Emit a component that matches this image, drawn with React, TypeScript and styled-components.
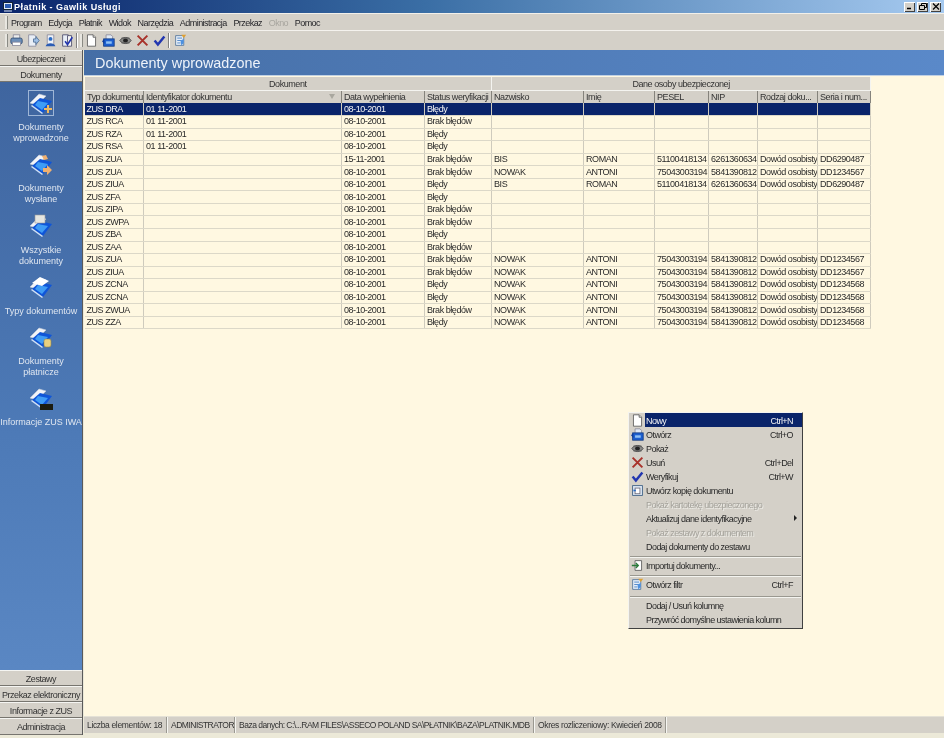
import styled, { createGlobalStyle } from "styled-components";
import type { ReactNode } from "react";

const GlobalStyle = createGlobalStyle`
  html, body {
    margin: 0;
    padding: 0;
    background: #ece9d8;
  }
  body {
    font-family: "Liberation Sans", Arial, sans-serif;
    font-size: 9px;
    letter-spacing: -0.45px;
    color: #1c1c1c;
  }
`;

const Window = styled.div`
  width: 944px;
  height: 738px;
  position: relative;
  overflow: hidden;
  display: flex;
  flex-direction: column;
  background: #ece9d8;
  filter: blur(0.3px);
`;

const TitleBar = styled.div`
  height: 13px;
  flex: none;
  display: flex;
  align-items: center;
  background: linear-gradient(90deg, #0a246a 0%, #3a6ea5 45%, #a6caf0 100%);
  color: #fff;
  font-weight: 700;
  font-size: 9px;
  letter-spacing: 0.45px;
  padding: 0 3px 0 3px;
  gap: 1px;
`;

const TitleText = styled.span`
  flex: 1;
`;

const WinButtons = styled.div`
  display: flex;
  gap: 2px;
`;

const WinButton = styled.div`
  width: 11px;
  height: 10px;
  background: #d4d0c8;
  box-shadow: inset 1px 1px 0 #fff, inset -1px -1px 0 #404040;
  color: #000;
  display: flex;
  align-items: center;
  justify-content: center;
`;

const MenuBar = styled.div`
  height: 16px;
  flex: none;
  display: flex;
  align-items: center;
  background: #d4d0c8;
  border-top: 1px solid #f2f0ea;
  padding-left: 5px;
  border-bottom: 1px solid #f4f2ee;
`;

const Grip = styled.div`
  width: 2px;
  height: 13px;
  flex: none;
  background: #e8e6e0;
  border-right: 1px solid #8a8a84;
`;

const MenuItems = styled.div`
  display: flex;
  gap: 6.7px;
  margin-left: 3px;
  letter-spacing: -0.55px;
`;

const MenuItem = styled.span<{ $off?: boolean }>`
  color: ${(p) => (p.$off ? "#a8a69f" : "#26262a")};
  padding-top: 1px;
`;

const ToolBar = styled.div`
  height: 18px;
  flex: none;
  display: flex;
  align-items: center;
  background: #d4d0c8;
  padding: 0 0 1px 5px;
  box-sizing: content-box;
  margin-bottom: -1px;
  border-bottom: 1px solid #8f8d86;
`;

const ToolGroup = styled.div`
  display: flex;
  align-items: center;
  gap: 4px;
  margin-left: 2px;
  svg {
    width: 13px;
    height: 13px;
  }
`;

const ToolDivider = styled.div`
  width: 1px;
  height: 15px;
  background: #808080;
  border-right: 1px solid #fff;
  margin: 0 2px;
`;

const Body = styled.div`
  flex: 1;
  display: flex;
  min-height: 0;
  margin-bottom: 3px;
`;

const Side = styled.div`
  width: 82px;
  flex: none;
  display: flex;
  flex-direction: column;
  background: #d4d0c8;
  border-right: 1px solid #5a5a5a;
`;

const SideTab = styled.div<{ $h?: number }>`
  height: ${(p) => p.$h ?? 16}px;
  flex: none;
  box-sizing: border-box;
  display: flex;
  align-items: center;
  justify-content: center;
  padding-top: 1px;
  background: #d4d0c8;
  border-top: 1px solid #f5f5f2;
  border-bottom: 1px solid #77756f;
  color: #333;
  white-space: nowrap;
`;

const SideList = styled.div`
  flex: 1;
  display: flex;
  flex-direction: column;
  align-items: center;
  padding-top: 9px;
  background: linear-gradient(180deg, #3f659f 0%, #4d7ab7 60%, #5a87c3 100%);
`;

const SideItem = styled.div`
  width: 100%;
  flex: none;
  padding-bottom: 8.3px;
  display: flex;
  flex-direction: column;
  align-items: center;
  color: #dfe6f0;
  font-size: 9px;
  letter-spacing: 0;
  line-height: 11px;
  text-align: center;
  white-space: nowrap;
`;

const SideIconBox = styled.div<{ $active?: boolean }>`
  width: 24px;
  height: 24px;
  margin-bottom: 7px;
  display: flex;
  align-items: center;
  justify-content: center;
  outline: ${(p) => (p.$active ? "1px solid #9fb6d6" : "none")};
`;

const Main = styled.div`
  flex: 1;
  display: flex;
  flex-direction: column;
  min-width: 0;
  padding-left: 1px;
  background: #ece9d8;
`;

const Heading = styled.div`
  height: 25px;
  flex: none;
  display: flex;
  align-items: center;
  padding-left: 11px;
  color: #eef3fa;
  font-size: 14.4px;
  letter-spacing: 0;
  background: linear-gradient(90deg, #456ea6 0%, #5a89c9 100%);
  border-bottom: 1px solid #c0d0e4;
`;

const Content = styled.div`
  flex: 1;
  min-height: 0;
  padding-top: 1px;
  background: #fff8e1;
`;

const Table = styled.table`
  border-collapse: collapse;
  table-layout: fixed;
  width: 786px;
  font-size: 9px;
`;

const GroupCell = styled.th`
  height: 13px;
  padding: 0;
  font-weight: 400;
  text-align: center;
  color: #333;
  background: #d4d0c8;
  border-right: 1px solid #f4f4f0;
  border-bottom: 1px solid #f4f4f0;
`;

const HeadCell = styled.th`
  height: 12px;
  padding: 0 0 0 2px;
  font-weight: 400;
  text-align: left;
  color: #333;
  white-space: nowrap;
  overflow: hidden;
  position: relative;
  background: #d4d0c8;
  border-left: 1px solid #f4f4f0;
  border-right: 1px solid #85837c;
`;

const SortMark = styled.span`
  position: absolute;
  right: 6px;
  top: 3px;
  width: 0;
  height: 0;
  border-left: 3px solid transparent;
  border-right: 3px solid transparent;
  border-top: 5px solid #a9a79f;
`;

const Row = styled.tr<{ $on?: boolean }>`
  height: 12.55px;
  background: ${(p) => (p.$on ? "#0a246a" : "#fff8e1")};
  color: ${(p) => (p.$on ? "#f4f4f4" : "#2a2a2a")};
`;

const Cell = styled.td`
  padding: 0 0 0 2px;
  white-space: nowrap;
  overflow: hidden;
  line-height: 11px;
  border-right: 1px solid #cfcbbd;
  border-bottom: 1px solid #dcd8c8;
`;

const StatusBar = styled.div`
  height: 17px;
  flex: none;
  display: flex;
  margin-bottom: 2px;
  background: #d4d0c8;
  border-top: 1px solid #e4e1d6;
  box-sizing: border-box;
  font-size: 8.5px;
  letter-spacing: -0.35px;
  color: #333;
`;

const StatusCell = styled.div<{ $w: number; $tight?: boolean }>`
  width: ${(p) => p.$w}px;
  flex: none;
  display: flex;
  align-items: center;
  padding-left: 3px;
  box-sizing: border-box;
  white-space: nowrap;
  overflow: hidden;
  letter-spacing: ${(p) => (p.$tight ? "-0.5px" : "inherit")};
  border-right: 1px solid #f6f6f2;
  box-shadow: inset -1px 0 0 #9a9890;
`;

const Menu = styled.div`
  position: absolute;
  left: 628px;
  top: 412px;
  width: 175px;
  height: 217px;
  box-sizing: border-box;
  background: #d4d0c8;
  border: 1px solid;
  border-color: #f4f4f0 #404040 #404040 #f4f4f0;
  padding: 0 0 0 1px;
  display: flex;
  flex-direction: column;
  letter-spacing: -0.55px;
  color: #2a2a2a;
`;

const MenuRow = styled.div<{ $on?: boolean; $off?: boolean }>`
  height: 14px;
  flex: none;
  display: flex;
  align-items: center;
  background: ${(p) => (p.$on ? "linear-gradient(90deg, #d4d0c8 15px, #0a246a 15px)" : "none")};
  color: ${(p) => (p.$on ? "#f4f4f4" : p.$off ? "#a5a39c" : "#2a2a2a")};
  text-shadow: ${(p) => (p.$off ? "1px 1px 0 #ecebe6" : "none")};
`;

const MenuIcon = styled.div`
  width: 15px;
  height: 14px;
  flex: none;
  margin-right: 1px;
  display: flex;
  align-items: center;
  justify-content: center;
  svg {
    width: 13px;
    height: 13px;
  }
`;

const MenuLabel = styled.span`
  flex: 1;
  white-space: nowrap;
  padding-top: 1px;
`;

const MenuKey = styled.span`
  white-space: nowrap;
  text-align: right;
  padding: 1px 9px 0 0;
`;

const MenuSep = styled.div<{ $top?: number }>`
  height: 1px;
  flex: none;
  margin: ${(p) => p.$top ?? 3}px 1px 0 0;
  background: #9a9890;
  border-bottom: 1px solid #f4f4f0;
`;

const Arrow = styled.span`
  width: 0;
  height: 0;
  margin-right: 5px;
  border-top: 3px solid transparent;
  border-bottom: 3px solid transparent;
  border-left: 3px solid #222;
`;

/* icons */
const Ico = ({ children }: { children: ReactNode }) => (
  <svg width="13" height="13" viewBox="0 0 16 16">
    {children}
  </svg>
);

const NewIcon = () => (
  <Ico>
    <path d="M3 1h7l3 3v11H3z" fill="#fff" stroke="#555" />
    <path d="M10 1v3h3" fill="#ddd" stroke="#555" />
  </Ico>
);
const OpenIcon = () => (
  <Ico>
    <path d="M5 1h6l2 2v4H5z" fill="#dfe8f4" stroke="#889" />
    <rect x="2" y="6" width="13" height="9" fill="#1d5fd0" stroke="#123a80" />
    <path d="M5 9h7v3H5z" fill="#8fc0f4" />
    <path d="M0 9l3-3v6z" fill="#0c3a9a" />
  </Ico>
);
const EyeIcon = () => (
  <Ico>
    <path d="M1 8c3-5 11-5 14 0-3 5-11 5-14 0z" fill="#8a8a88" stroke="#444" />
    <ellipse cx="8" cy="8" rx="3" ry="2.4" fill="#222" />
    <path d="M3 5h10M3 11h10" stroke="#555" />
  </Ico>
);
const CrossIcon = () => (
  <Ico>
    <path d="M2 2l12 12M14 2L2 14" stroke="#a8322a" strokeWidth="2.4" />
  </Ico>
);
const CheckIcon = () => (
  <Ico>
    <path d="M2 8l4 5 8-10" fill="none" stroke="#2236b0" strokeWidth="3" />
  </Ico>
);
const CopyIcon = () => (
  <Ico>
    <rect x="2" y="2" width="12" height="12" fill="#dce6f2" stroke="#34587f" />
    <rect x="5" y="5" width="6" height="7" fill="#fff" stroke="#667" />
    <path d="M3 8h3" stroke="#2b6cc4" strokeWidth="2" />
  </Ico>
);
const ImportIcon = () => (
  <Ico>
    <path d="M5 2h8v12H5z" fill="#fff" stroke="#555" />
    <path d="M1 8h7M6 5l3 3-3 3" fill="none" stroke="#2a7a3a" strokeWidth="1.6" />
  </Ico>
);
const FilterIcon = () => (
  <Ico>
    <path d="M2 2h10v12H2z" fill="#e6eef8" stroke="#4c7098" />
    <path d="M4 5h6M4 8h5M4 11h4" stroke="#3a76c0" />
    <path d="M9 1h6l-3 4z" fill="#e0a030" />
    <path d="M8 8l4-2v5l-3 3z" fill="#4c90e0" />
  </Ico>
);
const PrinterIcon = () => (
  <Ico>
    <rect x="4" y="1" width="8" height="5" fill="#eee" stroke="#889" />
    <rect x="1" y="5" width="14" height="7" rx="2" fill="#6d8fb8" stroke="#2f4a70" />
    <rect x="3" y="10" width="10" height="4" fill="#fff" stroke="#889" />
  </Ico>
);
const SendIcon = () => (
  <Ico>
    <path d="M2 1h7l2 2v12H2z" fill="#e8eef6" stroke="#889" />
    <path d="M8 6h3V3l4 5-4 5v-3H8z" fill="#9fc0e6" stroke="#4c6c92" />
  </Ico>
);
const UserIcon = () => (
  <Ico>
    <path d="M4 1h8v13H4z" fill="#eef2f8" stroke="#889" />
    <circle cx="8" cy="6" r="2.4" fill="#2b6cc4" />
    <path d="M2 15c1-5 11-5 12 0z" fill="#2b5cb4" />
  </Ico>
);
const DocCheckIcon = () => (
  <Ico>
    <path d="M2 1h7v14H2z" fill="#e8eef6" stroke="#446" />
    <path d="M8 2h5v13H8z" fill="#f4f4f4" stroke="#446" />
    <path d="M5 9l3 4 6-9" fill="none" stroke="#2236b0" strokeWidth="2" />
  </Ico>
);

const Folder = ({ badge }: { badge?: ReactNode }) => (
  <svg width="24" height="24" viewBox="0 0 24 24">
    <path d="M1 12L10 3l7 2-9 9z" fill="#f2f4f8" stroke="#c6ccd8" strokeWidth="0.6" />
    <path d="M3 14l8-7 12 3-9 12z" fill="#0f55d8" />
    <path d="M9 10l10 2-6 7-7-5z" fill="#3f9cf6" />
    <path d="M3 14l11 8-1 1L2 15z" fill="#cfe0f8" />
    {badge}
  </svg>
);

const docs: [string, ReactNode][] = [
  ["Dokumenty wprowadzone", <path key="a" d="M15 17h3v-3h2v3h3v2h-3v3h-2v-3h-3z" fill="#f0b860" />],
  ["Dokumenty wysłane", <path key="b" d="M14 16h4v-3l5 5-5 5v-3h-4zM13 4l4-1 2 4-4 1z" fill="#f0b070" />],
  ["Wszystkie dokumenty", <rect key="c" x="6" y="1" width="10" height="8" fill="#e6e6e0" stroke="#999" strokeWidth="0.6" />],
  ["Typy dokumentów", <path key="d" d="M3 8l8-6 9 4-7 5z" fill="#fff" />],
  ["Dokumenty płatnicze", <rect key="e" x="15" y="14" width="7" height="8" rx="2" fill="#e8d080" stroke="#a08a40" strokeWidth="0.6" />],
  ["Informacje ZUS IWA", <rect key="f" x="11" y="18" width="13" height="6" fill="#1c1c10" />],
];

const columns = [
  { name: "Typ dokumentu", w: 59 },
  { name: "Identyfikator dokumentu", w: 198, sort: true },
  { name: "Data wypełnienia", w: 83 },
  { name: "Status weryfikacji", w: 67 },
  { name: "Nazwisko", w: 92 },
  { name: "Imię", w: 71 },
  { name: "PESEL", w: 54 },
  { name: "NIP", w: 49 },
  { name: "Rodzaj doku...", w: 60 },
  { name: "Seria i num...", w: 53 },
];

const BIS = ["BIS", "ROMAN", "51100418134", "6261360634", "Dowód osobisty", "DD6290487"];
const NOWAK7 = ["NOWAK", "ANTONI", "75043003194", "5841390812", "Dowód osobisty", "DD1234567"];
const NOWAK8 = ["NOWAK", "ANTONI", "75043003194", "5841390812", "Dowód osobisty", "DD1234568"];
const EMPTY = ["", "", "", "", "", ""];
const OK = "Brak błędów";
const BAD = "Błędy";
const D = "08-10-2001";
const ID = "01 11-2001";

const rows: string[][] = [
  ["ZUS DRA", ID, D, BAD, ...EMPTY],
  ["ZUS RCA", ID, D, OK, ...EMPTY],
  ["ZUS RZA", ID, D, BAD, ...EMPTY],
  ["ZUS RSA", ID, D, BAD, ...EMPTY],
  ["ZUS ZUA", "", "15-11-2001", OK, ...BIS],
  ["ZUS ZUA", "", D, OK, ...NOWAK7],
  ["ZUS ZIUA", "", D, BAD, ...BIS],
  ["ZUS ZFA", "", D, BAD, ...EMPTY],
  ["ZUS ZIPA", "", D, OK, ...EMPTY],
  ["ZUS ZWPA", "", D, OK, ...EMPTY],
  ["ZUS ZBA", "", D, BAD, ...EMPTY],
  ["ZUS ZAA", "", D, OK, ...EMPTY],
  ["ZUS ZUA", "", D, OK, ...NOWAK7],
  ["ZUS ZIUA", "", D, OK, ...NOWAK7],
  ["ZUS ZCNA", "", D, BAD, ...NOWAK8],
  ["ZUS ZCNA", "", D, BAD, ...NOWAK8],
  ["ZUS ZWUA", "", D, OK, ...NOWAK8],
  ["ZUS ZZA", "", D, BAD, ...NOWAK8],
];

const menuItems = ["Program", "Edycja", "Płatnik", "Widok", "Narzędzia", "Administracja", "Przekaz", "Okno", "Pomoc"];

export default function App() {
  return (
    <Window>
      <GlobalStyle />
      <TitleBar>
        <svg width="10" height="10" viewBox="0 0 10 10">
          <rect x="0.5" y="0.5" width="9" height="7" fill="#dfe8f8" stroke="#123" />
          <rect x="2" y="2" width="6" height="4" fill="#2b5cb4" />
          <path d="M1 9h8" stroke="#dfe8f8" />
        </svg>
        <TitleText>Płatnik - Gawlik Usługi</TitleText>
        <WinButtons>
          <WinButton>
            <svg width="8" height="7"><path d="M1 5.5h4" stroke="#000" strokeWidth="1.5" /></svg>
          </WinButton>
          <WinButton>
            <svg width="8" height="7"><path d="M0.5 2.5h5v4h-5zM2.5 2V0.5h5v4H6" fill="none" stroke="#000" /></svg>
          </WinButton>
          <WinButton>
            <svg width="8" height="7"><path d="M1 0.5l6 6M7 0.5l-6 6" stroke="#000" strokeWidth="1.2" /></svg>
          </WinButton>
        </WinButtons>
      </TitleBar>

      <MenuBar>
        <Grip />
        <MenuItems>
          {menuItems.map((m) => (
            <MenuItem key={m} $off={m === "Okno"}>{m}</MenuItem>
          ))}
        </MenuItems>
      </MenuBar>

      <ToolBar>
        <Grip />
        <ToolGroup>
          <PrinterIcon />
          <SendIcon />
          <UserIcon />
          <DocCheckIcon />
        </ToolGroup>
        <ToolDivider />
        <Grip />
        <ToolGroup>
          <NewIcon />
          <OpenIcon />
          <EyeIcon />
          <CrossIcon />
          <CheckIcon />
        </ToolGroup>
        <ToolDivider />
        <ToolGroup>
          <FilterIcon />
        </ToolGroup>
      </ToolBar>

      <Body>
        <Side>
          <SideTab>Ubezpieczeni</SideTab>
          <SideTab>Dokumenty</SideTab>
          <SideList>
            {docs.map(([label, badge], i) => {
              const words = label.split(" ");
              return (
                <SideItem key={label}>
                  <SideIconBox $active={i === 0}>
                    <Folder badge={badge} />
                  </SideIconBox>
                  {label === "Typy dokumentów" || label === "Informacje ZUS IWA" ? (
                    <span>{label}</span>
                  ) : (
                    <>
                      <span>{words[0]}</span>
                      <span>{words[1]}</span>
                    </>
                  )}
                </SideItem>
              );
            })}
          </SideList>
          <SideTab>Zestawy</SideTab>
          <SideTab>Przekaz elektroniczny</SideTab>
          <SideTab>Informacje z ZUS</SideTab>
          <SideTab $h={17}>Administracja</SideTab>
        </Side>

        <Main>
          <Heading>Dokumenty wprowadzone</Heading>
          <Content>
            <Table>
              <colgroup>
                {columns.map((c) => (
                  <col key={c.name} width={c.w} />
                ))}
              </colgroup>
              <thead>
                <tr>
                  <GroupCell colSpan={4}>Dokument</GroupCell>
                  <GroupCell colSpan={6}>Dane osoby ubezpieczonej</GroupCell>
                </tr>
                <tr>
                  {columns.map((c) => (
                    <HeadCell key={c.name}>
                      {c.name}
                      {c.sort && <SortMark />}
                    </HeadCell>
                  ))}
                </tr>
              </thead>
              <tbody>
                {rows.map((r, i) => (
                  <Row key={i} $on={i === 0}>
                    {r.map((v, j) => (
                      <Cell key={j}>{v}</Cell>
                    ))}
                  </Row>
                ))}
              </tbody>
            </Table>
          </Content>
          <StatusBar>
            <StatusCell $w={84}>Liczba elementów: 18</StatusCell>
            <StatusCell $w={68} $tight>ADMINISTRATOR</StatusCell>
            <StatusCell $w={299} $tight>Baza danych: C:\...RAM FILES\ASSECO POLAND SA\PŁATNIK\BAZA\PLATNIK.MDB</StatusCell>
            <StatusCell $w={132}>Okres rozliczeniowy: Kwiecień 2008</StatusCell>
          </StatusBar>
        </Main>
      </Body>

      <Menu>
        <MenuRow $on>
          <MenuIcon><NewIcon /></MenuIcon>
          <MenuLabel>Nowy</MenuLabel>
          <MenuKey>Ctrl+N</MenuKey>
        </MenuRow>
        <MenuRow>
          <MenuIcon><OpenIcon /></MenuIcon>
          <MenuLabel>Otwórz</MenuLabel>
          <MenuKey>Ctrl+O</MenuKey>
        </MenuRow>
        <MenuRow>
          <MenuIcon><EyeIcon /></MenuIcon>
          <MenuLabel>Pokaż</MenuLabel>
        </MenuRow>
        <MenuRow>
          <MenuIcon><CrossIcon /></MenuIcon>
          <MenuLabel>Usuń</MenuLabel>
          <MenuKey>Ctrl+Del</MenuKey>
        </MenuRow>
        <MenuRow>
          <MenuIcon><CheckIcon /></MenuIcon>
          <MenuLabel>Weryfikuj</MenuLabel>
          <MenuKey>Ctrl+W</MenuKey>
        </MenuRow>
        <MenuRow>
          <MenuIcon><CopyIcon /></MenuIcon>
          <MenuLabel>Utwórz kopię dokumentu</MenuLabel>
        </MenuRow>
        <MenuRow $off>
          <MenuIcon />
          <MenuLabel>Pokaż kartotekę ubezpieczonego</MenuLabel>
        </MenuRow>
        <MenuRow>
          <MenuIcon />
          <MenuLabel>Aktualizuj dane identyfikacyjne</MenuLabel>
          <Arrow />
        </MenuRow>
        <MenuRow $off>
          <MenuIcon />
          <MenuLabel>Pokaż zestawy z dokumentem</MenuLabel>
        </MenuRow>
        <MenuRow>
          <MenuIcon />
          <MenuLabel>Dodaj dokumenty do zestawu</MenuLabel>
        </MenuRow>
        <MenuSep />
        <MenuRow>
          <MenuIcon><ImportIcon /></MenuIcon>
          <MenuLabel>Importuj dokumenty...</MenuLabel>
        </MenuRow>
        <MenuSep />
        <MenuRow>
          <MenuIcon><FilterIcon /></MenuIcon>
          <MenuLabel>Otwórz filtr</MenuLabel>
          <MenuKey>Ctrl+F</MenuKey>
        </MenuRow>
        <MenuSep $top={5} />
        <MenuRow>
          <MenuIcon />
          <MenuLabel>Dodaj / Usuń kolumnę</MenuLabel>
        </MenuRow>
        <MenuRow>
          <MenuIcon />
          <MenuLabel>Przywróć domyślne ustawienia kolumn</MenuLabel>
        </MenuRow>
      </Menu>
    </Window>
  );
}
